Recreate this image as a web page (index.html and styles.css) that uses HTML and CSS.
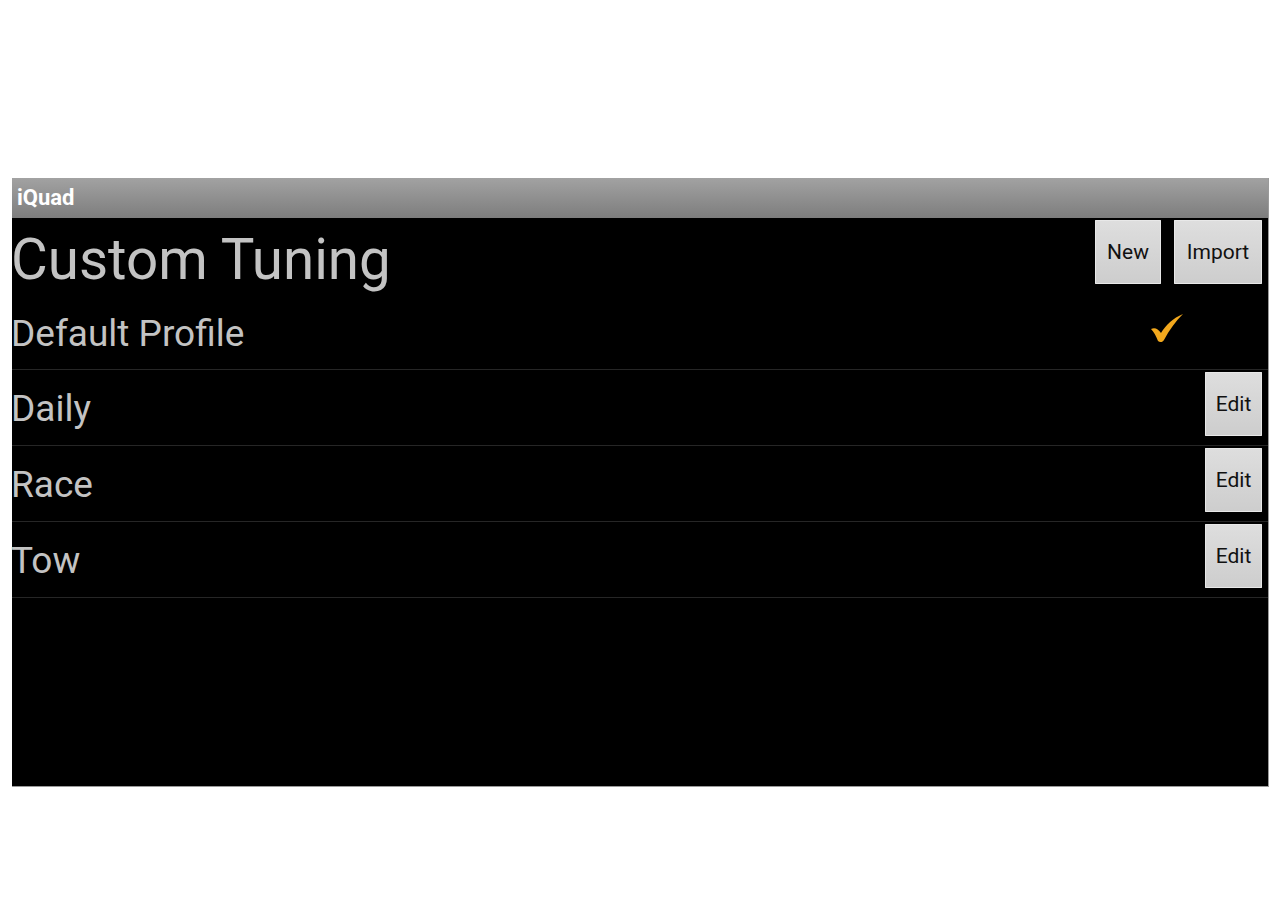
FILE: index.html
```html
<!DOCTYPE html>
<html>
<head>
<meta charset="utf-8">
<link rel="stylesheet" href="styles.css">
</head>
<body>
<div class="screen">
  <div class="appbar">iQuad</div>
  <div class="content">
    <div class="header">
      <div class="title">Custom Tuning</div>
      <div class="actions">
        <button class="btn btn-new">New</button>
        <button class="btn btn-import">Import</button>
      </div>
    </div>
    <div class="row row-default">
      <div class="label">Default Profile</div>
      <svg class="check" width="34" height="30" viewBox="0 0 34 30">
        <path d="M1 16 C5 14 8 16 11 20 C16 12 23 5 33 1 C26 8 19 17 14 27 C13 29 10 30 8 28 C6 23 4 19 1 16 Z" fill="#f2a81d"/>
      </svg>
    </div>
    <div class="row">
      <div class="label">Daily</div>
      <button class="btn btn-edit">Edit</button>
    </div>
    <div class="row">
      <div class="label">Race</div>
      <button class="btn btn-edit">Edit</button>
    </div>
    <div class="row">
      <div class="label">Tow</div>
      <button class="btn btn-edit">Edit</button>
    </div>
  </div>
</div>
</body>
</html>
```

FILE: styles.css
```css
html, body {
  margin: 0;
  padding: 0;
  background: #ffffff;
}
body {
  font-family: Roboto, "Liberation Sans", sans-serif;
}
.screen {
  margin: 178px 0 0 12px;
  width: 1256px;
  height: 608px;
  background: #000;
  display: flex;
  flex-direction: column;
  border-right: 1px solid #9a9a9a;
  border-bottom: 1px solid #9a9a9a;
  box-sizing: content-box;
}
.appbar {
  height: 40px;
  background: linear-gradient(#a2a2a2, #7d7d7d);
  color: #fff;
  font-weight: bold;
  font-size: 22px;
  line-height: 40px;
  padding-left: 5px;
  box-sizing: border-box;
  flex: none;
}
.content {
  display: flex;
  flex-direction: column;
}
.header {
  height: 78px;
  display: flex;
  justify-content: space-between;
  align-items: flex-start;
}
.title {
  color: #c3c3c3;
  font-size: 56.5px;
  line-height: 84px;
  margin-left: -1px;
}
.actions {
  display: flex;
  gap: 13px;
  padding: 2px 6px 0 0;
}
.btn {
  height: 64px;
  border: none;
  border-radius: 1px;
  background: linear-gradient(#dedede, #cdcdcd);
  color: #111;
  font-family: Roboto, "Liberation Sans", sans-serif;
  font-size: 21px;
  padding: 0;
  box-shadow: inset 0 0 0 1px #e8e8e8;
}
.btn-new { width: 66px; }
.btn-import { width: 88px; }
.btn-edit { width: 57px; margin: 2px 6px 0 0; }
.row {
  height: 75px;
  border-bottom: 1px solid #262626;
  display: flex;
  justify-content: space-between;
  align-items: flex-start;
}
.row-default {
  height: 73px;
}
.label {
  color: #c3c3c3;
  font-size: 37px;
  line-height: 78px;
  margin-left: -1px;
}
.row-default .label {
  line-height: 76px;
}
.check {
  margin: 17px 84px 0 0;
}
```
